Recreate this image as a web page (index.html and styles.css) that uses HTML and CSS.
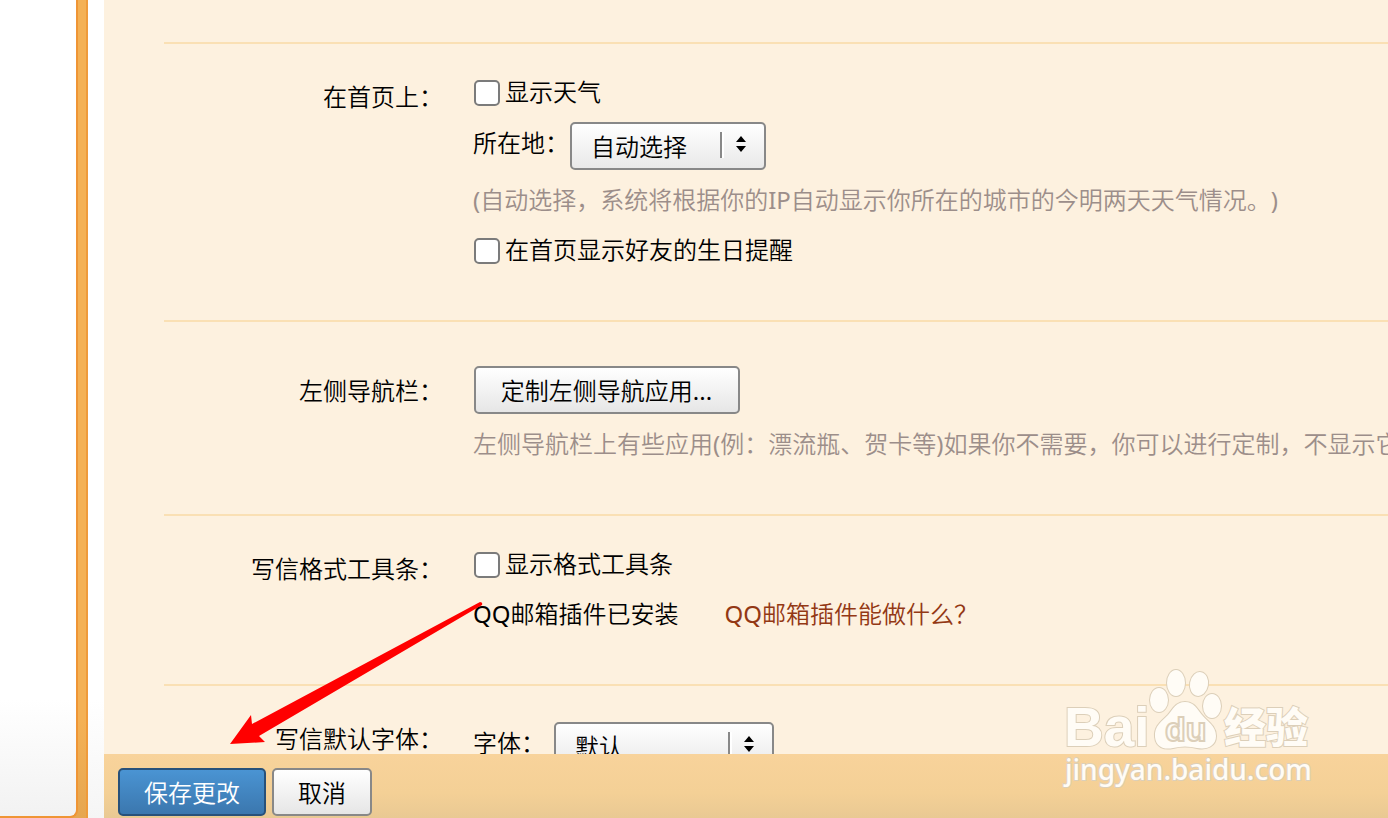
FILE: index.html
```html
<!doctype html>
<html lang="zh-CN">
<head>
<meta charset="utf-8">
<title>QQ邮箱设置</title>
<link rel="stylesheet" href="styles.css">
</head>

<body>
<div class="side">
	<div class="side-panel"></div>
</div>
<div class="main">
	<form class="settings" id="settings">
		<div class="group">
			<div class="name">在首页上：</div>
			<div class="con">
				<label class="check"><input type="checkbox">显示天气</label>
				<div class="field">
					<label for="city">所在地：</label>
					<span class="sel city">
						<select id="city"><option>自动选择</option></select>
						<svg width="10" height="16" viewBox="0 0 10 16"><path d="M5 0l5 6H0zM5 16l5-6H0z"/></svg>
					</span>
				</div>
				<p class="hint">(自动选择，系统将根据你的IP自动显示你所在的城市的今明两天天气情况。)</p>
				<label class="check next"><input type="checkbox">在首页显示好友的生日提醒</label>
			</div>
		</div>
		<div class="group nav">
			<div class="name">左侧导航栏：</div>
			<div class="con">
				<button type="button" class="btn">定制左侧导航应用...</button>
				<p class="hint">左侧导航栏上有些应用(例：漂流瓶、贺卡等)如果你不需要，你可以进行定制，不显示它们。</p>
			</div>
		</div>
		<div class="group">
			<div class="name">写信格式工具条：</div>
			<div class="con">
				<label class="check"><input type="checkbox">显示格式工具条</label>
				<p class="next">QQ邮箱插件已安装<a href="#">QQ邮箱插件能做什么？</a></p>
			</div>
		</div>
		<div class="group font">
			<div class="name">写信默认字体：</div>
			<div class="con">
				<div class="field">
					<label for="font">字体：</label>
					<span class="sel family">
						<select id="font"><option>默认</option></select>
						<svg width="10" height="16" viewBox="0 0 10 16"><path d="M5 0l5 6H0zM5 16l5-6H0z"/></svg>
					</span>
				</div>
			</div>
		</div>
	</form>
	<div class="bar">
		<button type="submit" form="settings" class="btn save">保存更改</button>
		<button type="button" class="btn">取消</button>
	</div>
</div>

<svg class="arrow" width="256" height="146" viewBox="0 0 256 146">
	<path d="M0 144L21 115L22 124L250 2Q253 2 252 5L29 136L35 142Z" fill="#f00"/>
</svg>

<svg class="mark" width="260" height="130" viewBox="0 0 260 130">
	<g class="logo">
		<text class="bai" x="4" y="86">Bai</text>
		<ellipse cx="99" cy="40" rx="9" ry="12"/>
		<ellipse cx="116" cy="23" rx="9" ry="13"/>
		<ellipse cx="139" cy="24" rx="9" ry="12" transform="rotate(10 139 24)"/>
		<ellipse cx="152" cy="46" rx="9" ry="12"/>
		<path d="M125 42C116 42 113 49 108 55C102 61 94 66 95 77C96 87 104 90 113 88Q125 85 137 88C147 90 156 86 156 76C156 66 147 61 142 55C137 49 134 42 125 42Z"/>
		<text class="jy" x="164" y="83">经验</text>
		<text class="url" x="5" y="120">jingyan.baidu.com</text>
	</g>
	<text class="du" x="105" y="81">du</text>
</svg>
</body>
</html>
```
FILE: styles.css
```css
*{ margin:0; padding:0; box-sizing:border-box;}
body{ display:flex; height:100vh; overflow:hidden; position:relative; background:linear-gradient(#fff 700px,#f5f5f5); font:24px/32px "Noto Sans","Noto Sans CJK SC DemiLight","Noto Sans CJK SC",sans-serif; text-spacing-trim:space-all; color:#000;}
button,select{ font:inherit; color:inherit;}

.side{ flex:none; width:88px; padding-right:8px; background:linear-gradient(#f4b155 720px,#e6a650); border-right:2px solid #ef9b3b;}
.side-panel{ height:100%; background:linear-gradient(#fff 700px,#f2f2f2); border:solid #ef9535; border-width:0 2px 2px 0; border-radius:0 0 8px 0;}

.main{ flex:1; min-width:0; margin-left:16px; display:flex; flex-direction:column; background:#fdf1df;}
.settings{ flex:1; min-height:0; overflow:hidden; padding:42px 0 0 60px;}

.group{ display:flex; gap:30px; padding:32px 0 54px; border-top:2px solid #fae0b4; white-space:nowrap;}
.group.nav{ padding-top:44px;}
.group.font{ padding-top:36px;}
.name{ flex:none; width:279px; padding-top:5px; text-align:right;}
.nav .name{ padding-top:9px;}
.font .name{ padding-top:1px;}
.con{ flex:1; min-width:0;}
.con .btn{ margin-left:1px; padding:2px 24px 0 23px; min-width:266px;}

.check{ display:flex; align-items:center; gap:5px;}
.check input{ appearance:none; width:26px; height:26px; margin:2px 0 0 1px; background:#fff; border:2px solid #7b7b7b; border-radius:5px;}
.next{ margin-top:18px;}
.hint{ margin-top:14px; color:#9c8e8a;}
.con a{ margin-left:46px; color:#933814; text-decoration:none;}

.field{ display:flex; align-items:center;}
.field label{ padding-bottom:6px;}
.check+.field{ margin-top:14px;}
.sel{ position:relative; margin-left:1px;}
.sel select{ display:block; appearance:none; width:100%; height:48px; padding:2px 0 0 19px; border:2px solid #888; border-radius:5px; background:linear-gradient(#fff,#e9e9e9);}
.city{ width:196px;}
.sel.family{ width:220px; margin-left:9px;}
.sel:after{ content:""; position:absolute; right:42px; top:10px; width:4px; height:26px; box-sizing:border-box; background:#fff; border-left:2px solid #888; pointer-events:none;}
.sel svg{ position:absolute; right:20px; top:14px; pointer-events:none;}

.btn{ height:48px; padding:2px 24px 0; border:2px solid #888; border-radius:5px; background:linear-gradient(#fff,#e6e6e6);}
.btn.save{ color:#fff; border-color:#28517a; background:linear-gradient(#4a94d3,#3b77ae);}
.bar{ flex:none; display:flex; gap:6px; padding:14px 14px 2px; background:linear-gradient(#f8d39b,#f4d096 60%,#e9c993);}

.arrow{ position:absolute; left:230px; top:600px; pointer-events:none;}
.mark{ position:absolute; right:68px; bottom:28px; overflow:visible; pointer-events:none;}
.logo{ fill:#fffcf6; stroke:#dccfb9; stroke-width:2px; paint-order:stroke;}
.bai{ font:bold 55px "Liberation Sans",sans-serif;}
.jy{ font:900 42px "Noto Sans CJK SC",sans-serif;}
.url{ font:500 28px "Noto Sans",sans-serif;}
.du{ font:bold 34px "Liberation Sans",sans-serif; fill:#fffcf6; stroke:#dccfb9; stroke-width:2px;}
```
